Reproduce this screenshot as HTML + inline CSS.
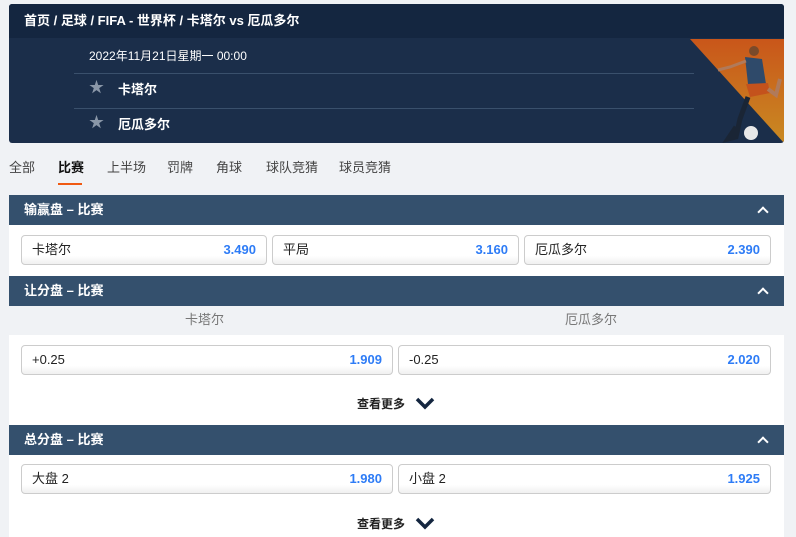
<!DOCTYPE html>
<html><head><meta charset="utf-8"><style>
*{box-sizing:border-box;margin:0;padding:0}
body{width:796px;height:537px;overflow:hidden;background:#f0f2f5;font-family:"Liberation Sans","Noto Sans CJK SC",sans-serif;font-size:13px;color:#222;position:relative;line-height:16px}
.abs{position:absolute}
.card{left:9px;top:4px;width:775px;height:139px;background:#1b2e4a;border-radius:3px;overflow:hidden}
.top{left:0;top:0;width:775px;height:34px;background:#142640;color:#fff;font-weight:bold;font-size:13px;padding:9px 15px}
.line{height:1px;background:#3a506c}
.team{color:#fff;font-weight:bold;font-size:13px}
.star{color:#8a97a8;font-size:15px}
.tabs span{position:absolute;top:160px;font-size:13px;color:#444}
.sec{left:9px;width:775px;background:#fff}
.hdr{left:9px;width:775px;height:30px;background:#34506d;color:#fff;font-weight:bold;font-size:13px;padding:7px 15px;line-height:16px}
.chev{position:absolute;right:17px;top:13px;width:8px;height:8px;border-left:2.5px solid #fff;border-top:2.5px solid #fff;transform:rotate(45deg)}
.btn{position:absolute;height:30px;border:1px solid #ccc;border-radius:4px;background:linear-gradient(#fff 70%,#f0f0f0);padding:0 10px;font-size:13px;display:flex;align-items:center;justify-content:space-between}
.btn b{color:#2e7cf6;font-weight:bold}
.more{position:absolute;left:357px;font-size:12px;font-weight:bold;color:#222}
</style></head><body>
<div class="abs card">
 <div class="abs top">首页 / 足球 / FIFA - 世界杯 / 卡塔尔 vs 厄瓜多尔</div>
 <div class="abs" style="left:80px;top:44px;color:#fff;font-size:12px">2022年11月21日星期一 00:00</div>
 <div class="abs line" style="left:65px;top:69px;width:620px"></div>
 <div class="abs star" style="left:80px;top:76px">★</div><div class="abs team" style="left:109px;top:78px">卡塔尔</div>
 <div class="abs line" style="left:65px;top:104px;width:620px"></div>
 <div class="abs star" style="left:80px;top:111px">★</div><div class="abs team" style="left:109px;top:113px">厄瓜多尔</div>
 <svg class="abs" style="left:681px;top:35px" width="94" height="104"><defs><linearGradient id="g" x1="0" y1="0" x2="0" y2="1"><stop offset="0" stop-color="#c9561a"/><stop offset="1" stop-color="#c98a22"/></linearGradient></defs><polygon points="0,0 94,0 94,104" fill="url(#g)"/>
 <circle cx="64" cy="12" r="5" fill="#7a4a2a"/><path d="M55,18 L72,20 L76,45 L58,45 Z" fill="#2f4a6a"/><path d="M56,45 L78,44 L80,54 L60,58 Z" fill="#c4521c"/><path d="M58,58 L50,80 L46,98 L38,100 L46,88" stroke="#1a2535" stroke-width="5" fill="none"/><path d="M78,50 L86,56 L90,40" stroke="#b07a5a" stroke-width="4" fill="none"/><path d="M56,22 L40,28 L28,31" stroke="#b07a5a" stroke-width="3" fill="none"/><circle cx="61" cy="94" r="7" fill="#e8e8e8"/></svg>
</div>
<div class="tabs"><span style="left:9px">全部</span><span style="left:58px;color:#111;font-weight:bold">比赛</span><span style="left:107px">上半场</span><span style="left:167px">罚牌</span><span style="left:216px">角球</span><span style="left:266px">球队竞猜</span><span style="left:339px">球员竞猜</span></div>
<div class="abs" style="left:58px;top:183px;width:24px;height:2px;background:#f05a12"></div>

<div class="abs hdr" style="top:195px">输赢盘 – 比赛<i class="chev"></i></div>
<div class="abs sec" style="top:225px;height:51px"></div>
<div class="btn" style="left:21px;top:235px;width:246px"><span>卡塔尔</span><b>3.490</b></div>
<div class="btn" style="left:272px;top:235px;width:247px"><span>平局</span><b>3.160</b></div>
<div class="btn" style="left:524px;top:235px;width:247px"><span>厄瓜多尔</span><b>2.390</b></div>

<div class="abs hdr" style="top:276px">让分盘 – 比赛<i class="chev"></i></div>
<div class="abs" style="left:185px;top:312px;color:#777;font-size:13px">卡塔尔</div>
<div class="abs" style="left:565px;top:312px;color:#777;font-size:13px">厄瓜多尔</div>
<div class="abs sec" style="top:335px;height:90px"></div>
<div class="btn" style="left:21px;top:345px;width:372px"><span>+0.25</span><b>1.909</b></div>
<div class="btn" style="left:398px;top:345px;width:373px"><span>-0.25</span><b>2.020</b></div>
<div class="more" style="top:396px">查看更多</div>
<svg class="abs" style="left:414px;top:396px" width="22" height="14"><path d="M3,3 L11,11 L19,3" stroke="#142640" stroke-width="3.5" fill="none"/></svg>

<div class="abs hdr" style="top:425px">总分盘 – 比赛<i class="chev"></i></div>
<div class="abs sec" style="top:455px;height:82px"></div>
<div class="btn" style="left:21px;top:464px;width:372px"><span>大盘 2</span><b>1.980</b></div>
<div class="btn" style="left:398px;top:464px;width:373px"><span>小盘 2</span><b>1.925</b></div>
<div class="more" style="top:516px">查看更多</div>
<svg class="abs" style="left:414px;top:516px" width="22" height="14"><path d="M3,3 L11,11 L19,3" stroke="#142640" stroke-width="3.5" fill="none"/></svg>
</body></html>
